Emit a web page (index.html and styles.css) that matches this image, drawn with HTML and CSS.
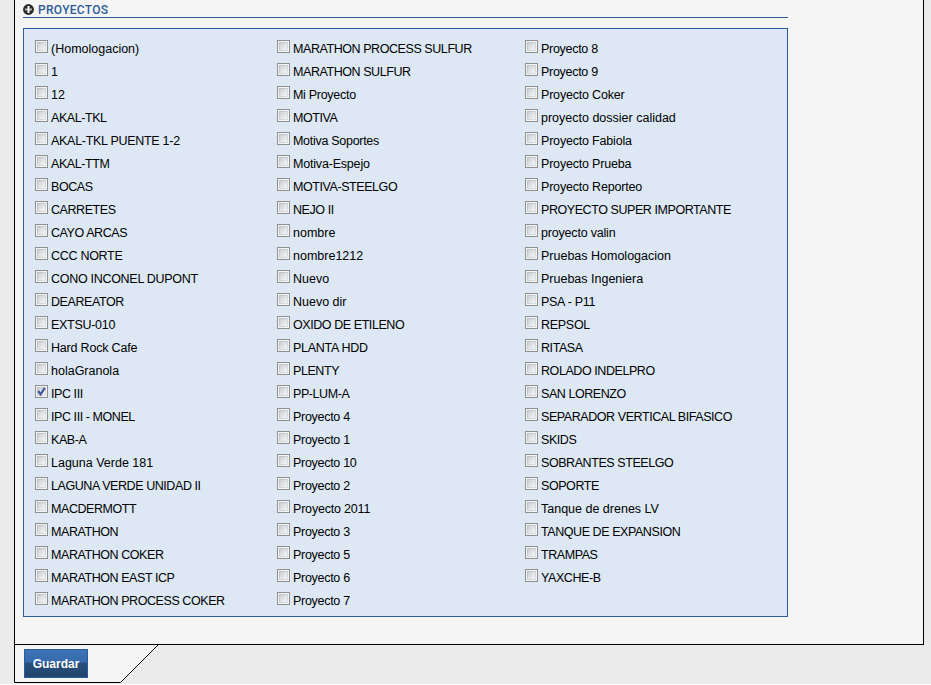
FILE: index.html
```html
<!DOCTYPE html>
<html lang="es">
<head>
<meta charset="utf-8">
<title>Proyectos</title>
<link rel="stylesheet" href="styles.css">
</head>
<body>
<main class="sheet">
<h2 class="heading"><svg class="heading-icon" width="11" height="11" viewBox="0 0 11 11"><circle cx="5.5" cy="5.5" r="5.4" fill="#292929"/><path d="M2 5.5H9" stroke="#b4b4b4" stroke-width="2"/><path d="M5.5 2V9" stroke="#fff" stroke-width="2"/></svg><span>PROYECTOS</span></h2>
<section class="projects">
<label><input type="checkbox"><span>(Homologacion)</span></label>
<label><input type="checkbox"><span>1</span></label>
<label><input type="checkbox"><span>12</span></label>
<label><input type="checkbox"><span class="caps">AKAL-TKL</span></label>
<label><input type="checkbox"><span class="semi">AKAL-TKL PUENTE 1-2</span></label>
<label><input type="checkbox"><span class="caps">AKAL-TTM</span></label>
<label><input type="checkbox"><span class="caps">BOCAS</span></label>
<label><input type="checkbox"><span class="caps">CARRETES</span></label>
<label><input type="checkbox"><span class="caps">CAYO ARCAS</span></label>
<label><input type="checkbox"><span class="semi">CCC NORTE</span></label>
<label><input type="checkbox"><span class="semi">CONO INCONEL DUPONT</span></label>
<label><input type="checkbox"><span class="caps">DEAREATOR</span></label>
<label><input type="checkbox"><span class="semi">EXTSU-010</span></label>
<label><input type="checkbox"><span class="mixed">Hard Rock Cafe</span></label>
<label><input type="checkbox"><span>holaGranola</span></label>
<label><input type="checkbox" checked><svg class="tick" width="13" height="13" viewBox="0 0 13 13"><path d="M3.2 6L5.6 9.4L9.8 2.8" fill="none" stroke="#40579b" stroke-width="2.2"/></svg><span class="caps">IPC III</span></label>
<label><input type="checkbox"><span class="caps">IPC III - MONEL</span></label>
<label><input type="checkbox"><span class="caps">KAB-A</span></label>
<label><input type="checkbox"><span>Laguna Verde 181</span></label>
<label><input type="checkbox"><span class="caps">LAGUNA VERDE UNIDAD II</span></label>
<label><input type="checkbox"><span class="caps">MACDERMOTT</span></label>
<label><input type="checkbox"><span class="caps">MARATHON</span></label>
<label><input type="checkbox"><span class="caps">MARATHON COKER</span></label>
<label><input type="checkbox"><span class="caps">MARATHON EAST ICP</span></label>
<label><input type="checkbox"><span class="caps">MARATHON PROCESS COKER</span></label>
<label><input type="checkbox"><span class="caps">MARATHON PROCESS SULFUR</span></label>
<label><input type="checkbox"><span class="caps">MARATHON SULFUR</span></label>
<label><input type="checkbox"><span class="semi">Mi Proyecto</span></label>
<label><input type="checkbox"><span class="caps">MOTIVA</span></label>
<label><input type="checkbox"><span class="semi">Motiva Soportes</span></label>
<label><input type="checkbox"><span class="mixed">Motiva-Espejo</span></label>
<label><input type="checkbox"><span class="caps">MOTIVA-STEELGO</span></label>
<label><input type="checkbox"><span class="caps">NEJO II</span></label>
<label><input type="checkbox"><span>nombre</span></label>
<label><input type="checkbox"><span>nombre1212</span></label>
<label><input type="checkbox"><span>Nuevo</span></label>
<label><input type="checkbox"><span>Nuevo dir</span></label>
<label><input type="checkbox"><span class="caps">OXIDO DE ETILENO</span></label>
<label><input type="checkbox"><span class="semi">PLANTA HDD</span></label>
<label><input type="checkbox"><span class="caps">PLENTY</span></label>
<label><input type="checkbox"><span class="caps">PP-LUM-A</span></label>
<label><input type="checkbox"><span class="semi">Proyecto 4</span></label>
<label><input type="checkbox"><span class="semi">Proyecto 1</span></label>
<label><input type="checkbox"><span class="semi">Proyecto 10</span></label>
<label><input type="checkbox"><span class="semi">Proyecto 2</span></label>
<label><input type="checkbox"><span class="mixed">Proyecto 2011</span></label>
<label><input type="checkbox"><span class="semi">Proyecto 3</span></label>
<label><input type="checkbox"><span class="semi">Proyecto 5</span></label>
<label><input type="checkbox"><span class="semi">Proyecto 6</span></label>
<label><input type="checkbox"><span class="semi">Proyecto 7</span></label>
<label><input type="checkbox"><span class="semi">Proyecto 8</span></label>
<label><input type="checkbox"><span class="semi">Proyecto 9</span></label>
<label><input type="checkbox"><span class="mixed">Proyecto Coker</span></label>
<label><input type="checkbox"><span>proyecto dossier calidad</span></label>
<label><input type="checkbox"><span class="mixed">Proyecto Fabiola</span></label>
<label><input type="checkbox"><span class="mixed">Proyecto Prueba</span></label>
<label><input type="checkbox"><span class="mixed">Proyecto Reporteo</span></label>
<label><input type="checkbox"><span class="caps">PROYECTO SUPER IMPORTANTE</span></label>
<label><input type="checkbox"><span class="mixed">proyecto valin</span></label>
<label><input type="checkbox"><span>Pruebas Homologacion</span></label>
<label><input type="checkbox"><span>Pruebas Ingeniera</span></label>
<label><input type="checkbox"><span class="semi">PSA - P11</span></label>
<label><input type="checkbox"><span class="semi">REPSOL</span></label>
<label><input type="checkbox"><span class="caps">RITASA</span></label>
<label><input type="checkbox"><span class="caps">ROLADO INDELPRO</span></label>
<label><input type="checkbox"><span class="caps">SAN LORENZO</span></label>
<label><input type="checkbox"><span class="caps">SEPARADOR VERTICAL BIFASICO</span></label>
<label><input type="checkbox"><span class="caps">SKIDS</span></label>
<label><input type="checkbox"><span class="caps">SOBRANTES STEELGO</span></label>
<label><input type="checkbox"><span class="caps">SOPORTE</span></label>
<label><input type="checkbox"><span>Tanque de drenes LV</span></label>
<label><input type="checkbox"><span class="caps">TANQUE DE EXPANSION</span></label>
<label><input type="checkbox"><span class="caps">TRAMPAS</span></label>
<label><input type="checkbox"><span class="caps">YAXCHE-B</span></label>
</section>
</main>
<footer class="actions">
<svg class="tab-shape" width="145" height="38" viewBox="0 0 145 38"><path d="M0 0H144L107 37.5H0Z" fill="#f5f5f5"/><path d="M.5 0V37.5H106.5L144 0" fill="none" stroke="#000"/></svg>
<button type="button" class="save">Guardar</button>
</footer>
</body>
</html>
```
FILE: styles.css
```css
* {
  box-sizing: border-box;
}

body {
  margin: 0;
  height: 685px;
  overflow: hidden;
  background: #ebebeb;
  border-bottom: 1px solid #fff;
  font-family: "Liberation Sans", Arial, sans-serif;
}

.sheet {
  width: 910px;
  height: 645px;
  margin-left: 14px;
  padding-left: 8px;
  background: #f5f5f5;
  border: 1px solid #000;
  border-top: 0;
}

.heading {
  display: flex;
  align-items: flex-start;
  gap: 4px;
  width: 765px;
  height: 18px;
  margin: 0 0 10px;
  padding-top: 3px;
  border-bottom: 1px solid #2c5c9a;
  color: #2c5c9a;
  font: 500 12px/14px Roboto, "Liberation Sans", sans-serif;
  letter-spacing: .3px;
}

.heading-icon {
  margin-top: 1px;
}

.projects {
  display: grid;
  grid-template-columns: 242px 248px 1fr;
  grid-template-rows: repeat(25, 23px);
  grid-auto-flow: column;
  width: 765px;
  height: 589px;
  padding: 6px 0 6px 11px;
  background: #dde8f4;
  border: 1px solid #2c5c9a;
  font-size: 12.5px;
  color: #000;
}

.projects label {
  display: flex;
  position: relative;
  align-items: flex-start;
  gap: 3px;
  padding-top: 5px;
  white-space: nowrap;
}

.projects span {
  line-height: 19px;
}

.caps {
  letter-spacing: -.43px;
}

.semi {
  letter-spacing: -.29px;
}

.mixed {
  letter-spacing: -.19px;
}

.projects input {
  appearance: none;
  flex: none;
  width: 13px;
  height: 13px;
  margin: 0;
  padding: 2px;
  border: 1px solid #8e8f8f;
  background:
    linear-gradient(135deg, #cbcfd5, #f6f6f6) content-box,
    linear-gradient(135deg, #b4b8be, #e4e6e9) padding-box;
  box-shadow: inset 0 0 0 1px #f4f4f4;
}

.tick {
  position: absolute;
  left: 0;
  top: 5px;
}

.actions {
  position: relative;
  width: 145px;
  height: 38px;
  margin-left: 14px;
  padding: 4px 0 0 10px;
}

.tab-shape {
  position: absolute;
  left: 0;
  top: 0;
}

.save {
  position: relative;
  display: block;
  width: 64px;
  height: 29px;
  padding: 0;
  border: 1px solid #2c5c9a;
  background: linear-gradient(#3c74b7 0, #376bad 12px, #27507d 13px, #22456c 100%);
  color: #fff;
  font: bold 12px "Liberation Sans", Arial, sans-serif;
}
```
